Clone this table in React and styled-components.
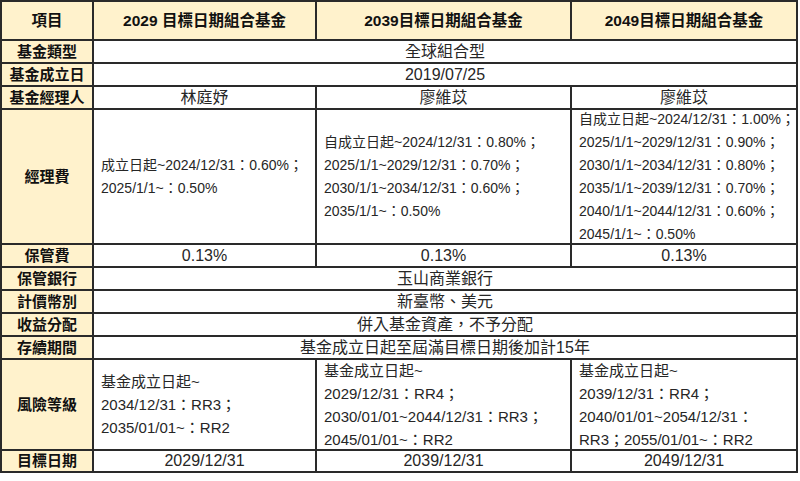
import React from "react";
import styled, { createGlobalStyle } from "styled-components";

const GlobalStyle = createGlobalStyle`
  html, body {
    margin: 0;
    padding: 0;
    background: #ffffff;
  }
  body {
    font-family: "Liberation Sans", "Noto Sans CJK TC", Arial, sans-serif;
    color: #262626;
  }
`;

const Table = styled.div`
  display: grid;
  grid-template-columns: 90px 221px 253px 224px;
  grid-template-rows: 37px 21px 21px 21px 133px 21px 21px 21px 21px 21px 89px 20px;
  gap: 2px;
  padding: 2px;
  width: 798px;
  box-sizing: border-box;
  background: #2a2a2a;
`;

const Cell = styled.div`
  grid-column: span ${(p) => p.$span || 1};
  display: flex;
  align-items: center;
  justify-content: center;
  background: #ffffff;
  font-size: 16px;
  line-height: 20px;
  white-space: nowrap;
  color: #262626;
`;

const HeadCell = styled(Cell)`
  background: #fff2cc;
  font-size: 15.5px;
  font-weight: bold;
  color: #111;
`;

const LabelCell = styled(Cell)`
  background: #fff2cc;
  font-size: 15px;
  font-weight: bold;
  color: #111;
`;

const NoteCell = styled(Cell)`
  flex-direction: column;
  align-items: flex-start;
  justify-content: center;
  padding-left: 7px;
  font-size: ${(p) => p.$size || 14}px;
  line-height: 23px;
`;

const Line = styled.span`
  display: block;
`;

const funds = ["2029 目標日期組合基金", "2039目標日期組合基金", "2049目標日期組合基金"];

const feeNotes = [
  ["成立日起~2024/12/31：0.60%；", "2025/1/1~：0.50%"],
  [
    "自成立日起~2024/12/31：0.80%；",
    "2025/1/1~2029/12/31：0.70%；",
    "2030/1/1~2034/12/31：0.60%；",
    "2035/1/1~：0.50%",
  ],
  [
    "自成立日起~2024/12/31：1.00%；",
    "2025/1/1~2029/12/31：0.90%；",
    "2030/1/1~2034/12/31：0.80%；",
    "2035/1/1~2039/12/31：0.70%；",
    "2040/1/1~2044/12/31：0.60%；",
    "2045/1/1~：0.50%",
  ],
];

const riskNotes = [
  ["基金成立日起~", "2034/12/31：RR3；", "2035/01/01~：RR2"],
  ["基金成立日起~", "2029/12/31：RR4；", "2030/01/01~2044/12/31：RR3；", "2045/01/01~：RR2"],
  ["基金成立日起~", "2039/12/31：RR4；", "2040/01/01~2054/12/31：", "RR3；2055/01/01~：RR2"],
];

const shared = [
  ["保管銀行", "玉山商業銀行"],
  ["計價幣別", "新臺幣、美元"],
  ["收益分配", "併入基金資產，不予分配"],
  ["存續期間", "基金成立日起至屆滿目標日期後加計15年"],
];

const Notes = ({ lines, size }) => (
  <NoteCell $size={size}>
    {lines.map((l, i) => (
      <Line key={i}>{l}</Line>
    ))}
  </NoteCell>
);

export default function App() {
  return (
    <>
      <GlobalStyle />
      <Table>
        <HeadCell>項目</HeadCell>
        {funds.map((f) => (
          <HeadCell key={f}>{f}</HeadCell>
        ))}

        <LabelCell>基金類型</LabelCell>
        <Cell $span={3}>全球組合型</Cell>

        <LabelCell>基金成立日</LabelCell>
        <Cell $span={3}>2019/07/25</Cell>

        <LabelCell>基金經理人</LabelCell>
        <Cell>林庭妤</Cell>
        <Cell>廖維苡</Cell>
        <Cell>廖維苡</Cell>

        <LabelCell>經理費</LabelCell>
        {feeNotes.map((n, i) => (
          <Notes key={i} lines={n} size={14} />
        ))}

        <LabelCell>保管費</LabelCell>
        <Cell>0.13%</Cell>
        <Cell>0.13%</Cell>
        <Cell>0.13%</Cell>

        {shared.map(([label, value]) => (
          <React.Fragment key={label}>
            <LabelCell>{label}</LabelCell>
            <Cell $span={3}>{value}</Cell>
          </React.Fragment>
        ))}

        <LabelCell>風險等級</LabelCell>
        {riskNotes.map((n, i) => (
          <Notes key={i} lines={n} size={15} />
        ))}

        <LabelCell>目標日期</LabelCell>
        <Cell>2029/12/31</Cell>
        <Cell>2039/12/31</Cell>
        <Cell>2049/12/31</Cell>
      </Table>
    </>
  );
}
